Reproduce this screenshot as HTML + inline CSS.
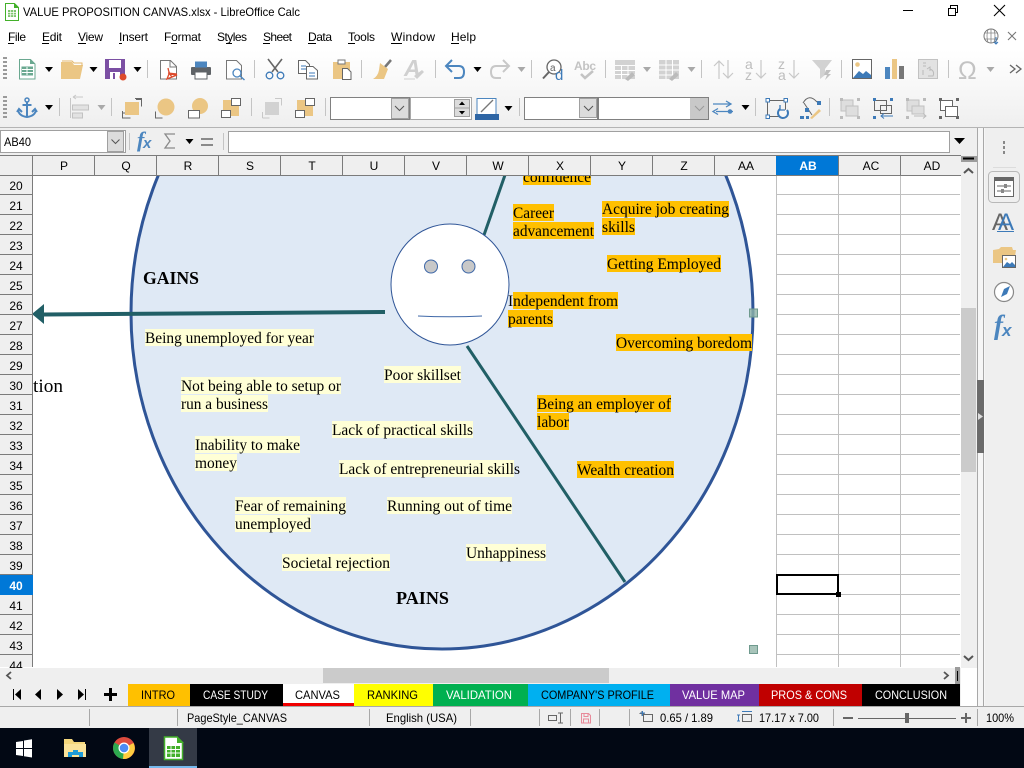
<!DOCTYPE html>
<html lang="en"><head><meta charset="utf-8"><title>VALUE PROPOSITION CANVAS.xlsx - LibreOffice Calc</title>
<style>
html,body{margin:0;padding:0;width:1024px;height:768px;overflow:hidden;background:#fff}
svg{display:block;position:absolute;left:0;top:0}
text{font-family:"Liberation Sans",sans-serif;font-size:12px;fill:#000;white-space:pre}
.s text,text.s{font-family:"Liberation Serif",serif;font-size:15.4px;fill:#000}
.b{font-weight:bold;font-size:17.7px !important}
.c{text-anchor:middle}
.w{fill:#fff}
</style></head><body>
<svg width="1024" height="768" viewBox="0 0 1024 768" xmlns="http://www.w3.org/2000/svg">
<defs>
<linearGradient id="tb" x1="0" y1="0" x2="0" y2="1"><stop offset="0" stop-color="#fff"/><stop offset="1" stop-color="#efefef"/></linearGradient>
<clipPath id="sheet"><rect x="33" y="176" width="927" height="491"/></clipPath>
<polygon id="dd" points="-4,-2 4,-2 0,3" fill="#000"/>
<polygon id="dg" points="-4,-2 4,-2 0,3" fill="#a9a9a9"/>
<g id="sep"><rect x="0" y="0" width="1" height="18" fill="#c4c4c4"/></g>
</defs>

<!-- chrome backgrounds -->
<rect width="1024" height="50" fill="#fff"/>
<rect y="50" width="1024" height="77" fill="url(#tb)"/>
<rect y="127" width="1024" height="1" fill="#b4b4b4"/>
<rect y="128" width="1024" height="28" fill="#efefef"/>

<!-- title bar -->
<g>
<path d="M5.5 3.5h9l4 4v13h-13z" fill="#fff" stroke="#43b02a"/><path d="M14 3l5 5h-5z" fill="#43b02a"/>
<rect x="8" y="10" width="8" height="7" fill="#7fc56e"/><path d="M8 12.5h8M8 14.8h8M10.7 10v7M13.4 10v7" stroke="#fff" stroke-width=".7"/>
</g>
<text x="23" y="16" textLength="277" lengthAdjust="spacingAndGlyphs">VALUE PROPOSITION CANVAS.xlsx - LibreOffice Calc</text>
<rect x="903" y="10" width="10" height="1" fill="#000"/>
<path d="M948.500 8.500h7v7h-7zM950.500 8.500v-3h7v7h-2" fill="none" stroke="#000"/>
<path d="M994 5l11 11M1005 5l-11 11" stroke="#000" stroke-width="1.100"/>

<!-- menu -->
<text x="8" y="41" textLength="18">File</text><rect x="8" y="43" width="6" height="1"/>
<text x="42" y="41" textLength="20">Edit</text><rect x="42" y="43" width="7" height="1"/>
<text x="78" y="41" textLength="25">View</text><rect x="78" y="43" width="8" height="1"/>
<text x="119" y="41" textLength="29">Insert</text><rect x="119" y="43" width="3" height="1"/>
<text x="164" y="41" textLength="37">Format</text><rect x="171" y="43" width="6" height="1"/>
<text x="217" y="41" textLength="30">Styles</text><rect x="226" y="43" width="6" height="1"/>
<text x="263" y="41" textLength="29">Sheet</text><rect x="263" y="43" width="7" height="1"/>
<text x="308" y="41" textLength="24">Data</text><rect x="308" y="43" width="8" height="1"/>
<text x="348" y="41" textLength="27">Tools</text><rect x="348" y="43" width="7" height="1"/>
<text x="391" y="41" textLength="44">Window</text><rect x="391" y="43" width="11" height="1"/>
<text x="451" y="41" textLength="25">Help</text><rect x="451" y="43" width="8" height="1"/>
<circle cx="991" cy="36" r="7" fill="#fff" stroke="#777"/><path d="M984 33h14M984 39h14M988 29.500q-2 6.500 0 13M994 29.500q2 6.500 0 13M991 29v14" fill="none" stroke="#888" stroke-width=".8"/><path d="M996 37v7m-2-2l2 2 2-2" fill="none" stroke="#3d7ab8"/>
<path d="M1008 32l8 8M1016 32l-8 8" stroke="#777" stroke-width="1.100"/>

<!-- toolbar 1 -->
<path d="M3 57h4v2h-4zM3 61h4v2h-4zM3 65h4v2h-4zM3 69h4v2h-4zM3 73h4v2h-4zM3 77h4v2h-4z" fill="#9a9a9a"/>
<path d="M19.500 59.500h11l4.500 4.500v15h-15.500z" fill="#fff" stroke="#6aa890"/><path d="M30 59l5 5h-5z" fill="#6aa890"/>
<rect x="21.500" y="66.500" width="11.500" height="9" fill="#6aa890"/><path d="M22 69.500h11M22 72.500h11M27 67v8" stroke="#fff"/>
<use href="#dd" x="49" y="69"/>
<path d="M61 62h11l2 3h9l-3 14h-19z" fill="#ebc684"/><path d="M62 61h10l2 2h8v3" fill="none" stroke="#e3b86e"/>
<use href="#dd" x="93.500" y="69"/>
<rect x="105" y="59" width="20" height="20" fill="#7b4fa3"/><rect x="109" y="60" width="12" height="8" fill="#fff"/><rect x="110" y="72" width="10" height="7" fill="#fff"/><rect x="113" y="73" width="2" height="6" fill="#7b4fa3"/><circle cx="123" cy="77" r="3.500" fill="#dd4b2c"/>
<use href="#dd" x="137.500" y="69"/>
<use href="#sep" x="147" y="60"/>
<path d="M160.500 60.500h10l6 6v12.500h-16z" fill="#fff" stroke="#777"/><path d="M170 60v7h6" fill="none" stroke="#777"/><path d="M168 68q1 6 4 9M172 77l-5 2 2-5 8 1z M168 73l9 1" fill="none" stroke="#dd4b2c" stroke-width="1.300"/>
<rect x="191" y="67" width="20" height="8" rx="1" fill="#5f6367"/><rect x="195" y="61.500" width="12" height="6" fill="#4c86bf"/><rect x="195" y="72" width="12" height="7" fill="#fff" stroke="#5f6367"/>
<path d="M226.500 60.500h10l5 5v13.500h-15z" fill="#fff" stroke="#777"/><circle cx="237" cy="73" r="4" fill="#fff" stroke="#4c86bf" stroke-width="1.300"/><path d="M240 76l4.500 4" stroke="#4c86bf" stroke-width="1.500"/>
<use href="#sep" x="254" y="60"/>
<path d="M268 59l10 13M282 59l-10 13" stroke="#666" stroke-width="1.600"/><circle cx="269.500" cy="75.500" r="3.300" fill="none" stroke="#3d7ab8" stroke-width="1.300"/><circle cx="280.500" cy="75.500" r="3.300" fill="none" stroke="#3d7ab8" stroke-width="1.300"/>
<path d="M298.500 60.500h7l4 4v9h-11z" fill="#fff" stroke="#666"/><path d="M306.500 66.500h6.500l4.500 4v8.500h-11z" fill="#fff" stroke="#666"/><path d="M301 66h5M301 69h5M309 73h6M309 76h6" stroke="#3d7ab8"/>
<path d="M333 62h17v17h-17z" fill="#ebc684"/><rect x="338" y="60" width="7" height="4" fill="#fff" stroke="#777"/><path d="M342.500 68.500h5l3.500 3.500v7.500h-8.500z" fill="#fff" stroke="#666"/>
<use href="#sep" x="361" y="60"/>
<path d="M391 60l-6 7" stroke="#777" stroke-width="2.500"/><path d="M380 63l8 6-4 10h-11q5-3 6-9z" fill="#ebc684"/>
<text x="404" y="76" style="font-size:23px;font-weight:bold;fill:#d0d0d0;font-style:italic">A</text><path d="M414 76l8-6 2 2-7 7z" fill="#cfcfcf"/><path d="M404 79h11" stroke="#cfcfcf"/>
<use href="#sep" x="435" y="60"/>
<path d="M447 66h12q5 0 5 6t-5 6h-5M452 60l-6 6 6 6" fill="none" stroke="#4c86bf" stroke-width="2"/>
<use href="#dd" x="477.500" y="69"/>
<path d="M508 66h-12q-5 0-5 6t5 6h5M503 60l6 6-6 6" fill="none" stroke="#c8c8c8" stroke-width="2"/>
<use href="#dg" x="521.500" y="69"/>
<use href="#sep" x="531" y="60"/>
<circle cx="554" cy="67" r="7" fill="#fff" stroke="#666" stroke-width="1.300"/><path d="M549 72l-6 6.500" stroke="#666" stroke-width="2"/><text x="550" y="71" style="font-size:10px;fill:#666">a</text><text x="555" y="80" style="font-size:15px;fill:#3d7ab8">d</text>
<text x="574" y="70" style="font-size:12px;font-weight:bold;fill:#c3c3c3" textLength="22">Abc</text><path d="M581 74l4 4 8-7" fill="none" stroke="#c3c3c3" stroke-width="2.500"/>
<use href="#sep" x="605" y="60"/>
<path d="M615 60h20v5h-20zM615 66h20v13h-20z" fill="#d2d2d2"/><path d="M615 70.500h20M615 74.500h20M621.500 66v13M628 66v13" stroke="#fff"/><path d="M625 79l7-7 3 3-7 6z" fill="#bbb"/>
<use href="#dg" x="647" y="69"/>
<path d="M659 60h20v19h-20z" fill="#d2d2d2"/><path d="M659 65h20M659 70h20M659 75h20M666 60v19M672.500 60v19" stroke="#fff"/><path d="M669 79l7-7 3 3-7 6z" fill="#bbb"/>
<use href="#dg" x="691.500" y="69"/>
<use href="#sep" x="701" y="60"/>
<path d="M719 79v-18m-5 5l5-5 5 5M728 60v18m-5-5l5 5 5-5" fill="none" stroke="#c8c8c8" stroke-width="1.200"/>
<text x="745" y="69" style="font-size:14px;fill:#bdbdbd">a</text><text x="745" y="80" style="font-size:14px;fill:#bdbdbd">z</text><path d="M761 60v18m-5-5l5 5 5-5" fill="none" stroke="#c8c8c8" stroke-width="1.200"/>
<text x="778" y="69" style="font-size:14px;fill:#bdbdbd">z</text><text x="778" y="80" style="font-size:14px;fill:#bdbdbd">a</text><path d="M794 60v18m-5-5l5 5 5-5" fill="none" stroke="#c8c8c8" stroke-width="1.200"/>
<path d="M812 60h20l-7 9v6l-5 4v-10z" fill="#d2d2d2"/><path d="M826 70l5 0-3 4 3 0-6 6 2-5-3 0z" fill="#c0c0c0"/>
<use href="#sep" x="841" y="60"/>
<rect x="852.500" y="59.500" width="19" height="19" fill="#fff" stroke="#666"/><path d="M853 78l6-7 4 3 3-3 5 4v3z" fill="#3d7ab8"/><circle cx="857.500" cy="64.500" r="2.300" fill="#ebc684"/>
<rect x="885" y="67" width="5" height="12" fill="#4c86bf"/><rect x="892" y="59" width="5" height="20" fill="#ebc684"/><rect x="899" y="66" width="5" height="13" fill="#777"/>
<rect x="918.500" y="59.500" width="19" height="19" fill="#e2e2e2" stroke="#c2c2c2"/><path d="M923 63h3M923 66h3M923 70v5m5 1h5q2-5-3-7m-3 0l3-2v4" fill="none" stroke="#bbb"/>
<use href="#sep" x="948" y="60"/>
<text x="958" y="79" style="font-size:25px;fill:#c3c3c3" textLength="21">&#937;</text>
<use href="#dg" x="990.500" y="69"/>
<path d="M1010 65l5 4-5 4M1016 65l5 4-5 4" fill="none" stroke="#666" stroke-width="1.300"/>

<!-- toolbar 2 -->
<path d="M3 96h4v2h-4zM3 100h4v2h-4zM3 104h4v2h-4zM3 108h4v2h-4zM3 112h4v2h-4zM3 116h4v2h-4z" fill="#9a9a9a"/>
<circle cx="27" cy="100" r="2" fill="none" stroke="#4c86bf" stroke-width="1.500"/><path d="M27 102v15M22.500 105h9M18 110q1 6 9 7q8-1 9-7M17 112l2-3 3 3M32 112l3-3 2 3" fill="none" stroke="#4c86bf" stroke-width="2"/>
<use href="#dd" x="49" y="107"/>
<use href="#sep" x="59" y="98"/>
<path d="M70.500 98v20" stroke="#c8c8c8"/><path d="M73 97h10M73 97l3-2M73 97l3 2" fill="none" stroke="#c8c8c8"/><rect x="72.500" y="105" width="16" height="5" fill="#e2e2e2" stroke="#c2c2c2"/><rect x="72.500" y="113" width="10" height="5" fill="#e2e2e2" stroke="#c2c2c2"/>
<use href="#dg" x="101.500" y="107"/>
<use href="#sep" x="111" y="98"/>
<path d="M122.500 118v-5h5v-6M122.500 118h8M136 99.500h5.500v7" fill="none" stroke="#666"/><path d="M135 98.500h6.500v7M122.500 111v7h7" fill="none" stroke="#666"/><rect x="125" y="102" width="14" height="13" fill="#ebc684"/>
<circle cx="166" cy="107" r="8.500" fill="#ebc684"/><path d="M155.500 111.500v6.500h7" fill="none" stroke="#666"/>
<circle cx="200" cy="106" r="8" fill="#ebc684"/><rect x="188.500" y="110.500" width="11" height="7.500" fill="#fff" stroke="#666"/>
<rect x="223" y="100" width="16" height="16" fill="#ebc684"/><rect x="231.500" y="98.500" width="9" height="7" fill="#fff" stroke="#666"/><rect x="221.500" y="110.500" width="9" height="7" fill="#fff" stroke="#666"/>
<use href="#sep" x="251" y="98"/>
<path d="M262.500 118v-6M262.500 118h7M275 98.500h6.500v7" fill="none" stroke="#c8c8c8"/><rect x="265" y="102" width="14" height="13" fill="#d2d2d2"/>
<rect x="297" y="100" width="16" height="16" fill="#ebc684"/><rect x="305.500" y="98.500" width="9" height="7" fill="#fff" stroke="#666"/><rect x="295.500" y="110.500" width="9" height="7" fill="#fff" stroke="#666"/>
<use href="#sep" x="325" y="98"/>
<rect x="330.500" y="97.500" width="79" height="22" fill="#fff" stroke="#808080"/>
<rect x="391.500" y="98.500" width="17" height="20" fill="#dcdcdc" stroke="#a0a0a0"/><path d="M395 106l4.500 4.500 4.500-4.500" fill="none" stroke="#555"/>
<rect x="410.500" y="97.500" width="61" height="22" fill="#fff" stroke="#a8a8a8"/>
<rect x="454.500" y="99.500" width="15" height="17" fill="#dcdcdc" stroke="#a0a0a0"/><path d="M455 108h14" stroke="#a0a0a0"/><polygon points="459,105 465,105 462,101.500"/><polygon points="459,111 465,111 462,114.500"/>
<rect x="477" y="98.500" width="19" height="16" fill="#fff" stroke="#4c86bf"/><path d="M481 112l12-12" stroke="#777" stroke-width="1.300"/><rect x="475" y="114" width="24" height="6" fill="#2f66a5"/>
<use href="#dd" x="508.500" y="108"/>
<use href="#sep" x="519" y="98"/>
<rect x="524.500" y="97.500" width="73" height="22" fill="#fff" stroke="#808080"/>
<rect x="579.500" y="98.500" width="17" height="19" fill="#dcdcdc" stroke="#a0a0a0"/><path d="M584 106l4.500 4.500 4.500-4.500" fill="none" stroke="#555"/>
<rect x="598.500" y="97.500" width="110" height="22" fill="#fff" stroke="#808080"/>
<rect x="690" y="98" width="18" height="21" fill="#c8c8c8"/><path d="M695 106l4.500 4.500 4.500-4.500" fill="none" stroke="#9a9a9a"/>
<path d="M713 104h18M726 101l5 3-5 3M733 111.500h-17M718 108.500l-5 3 5 3" fill="none" stroke="#4c86bf" stroke-width="1.300"/><circle cx="730" cy="111.500" r="2.300" fill="#4c86bf"/>
<use href="#dd" x="745.500" y="107"/>
<use href="#sep" x="755" y="98"/>
<rect x="767.500" y="100.500" width="18" height="16" fill="none" stroke="#666"/><path d="M787 110a5 5 0 1 1-7-1" fill="#f6f6f6" stroke="#3d7ab8" stroke-width="2"/><path d="M780 105v5h5" fill="none" stroke="#3d7ab8" stroke-width="1.300"/>
<g fill="#fff" stroke="#3d7ab8"><rect x="766" y="98.500" width="3.500" height="3.500"/><rect x="784" y="98.500" width="3.500" height="3.500"/><rect x="766" y="115" width="3.500" height="3.500"/></g>
<path d="M803 103q6-10 14-1M804 103l8 12" fill="none" stroke="#666"/><path d="M810 118l9-9 2 2-9 8z" fill="#ebc684"/><g fill="#3d7ab8"><rect x="800" y="116" width="4" height="3"/><rect x="806" y="116" width="3" height="3"/><rect x="805" y="108" width="4" height="4"/><rect x="817" y="101" width="4" height="4"/></g>
<use href="#sep" x="829" y="98"/>
<rect x="841" y="100" width="12" height="11" fill="#dedede" stroke="#c0c0c0"/><rect x="846" y="106" width="12" height="10" fill="#dedede" stroke="#c0c0c0"/><g fill="#bbb"><rect x="840" y="98" width="3" height="3"/><rect x="857" y="98" width="3" height="3"/><rect x="840" y="116" width="3" height="3"/><rect x="857" y="116" width="3" height="3"/></g>
<rect x="874.500" y="100.500" width="12" height="10" fill="none" stroke="#666"/><rect x="880.500" y="105.500" width="11" height="8" fill="none" stroke="#666"/><path d="M893 116h-12m3-2.500l-3 2.500 3 2.500" fill="none" stroke="#3d7ab8"/><g fill="#3d7ab8"><rect x="873" y="98" width="3" height="3"/><rect x="890" y="98" width="3" height="3"/><rect x="873" y="116" width="3" height="3"/></g>
<rect x="907" y="100" width="12" height="11" fill="#dedede" stroke="#c0c0c0"/><rect x="912" y="106" width="12" height="8" fill="#dedede" stroke="#c0c0c0"/><path d="M914 116h12m-3-2.500l3 2.500-3 2.500" fill="none" stroke="#bbb"/><g fill="#bbb"><rect x="906" y="98" width="3" height="3"/><rect x="923" y="98" width="3" height="3"/><rect x="906" y="116" width="3" height="3"/></g>
<rect x="940.500" y="100.500" width="12" height="10" fill="#fff" stroke="#666"/><rect x="945.500" y="106.500" width="12" height="10" fill="#fff" stroke="#666"/><g fill="#666"><rect x="939" y="98" width="3" height="3"/><rect x="956" y="98" width="3" height="3"/><rect x="939" y="116" width="3" height="3"/><rect x="956" y="116" width="3" height="3"/></g>

<!-- formula bar -->
<rect x="0.500" y="130.500" width="125" height="22" fill="#fff" stroke="#a0a0a0"/>
<rect x="107.500" y="131.500" width="16" height="20" fill="#dcdcdc" stroke="#a0a0a0"/><path d="M111.500 139.500l4 4 4-4" fill="none" stroke="#555"/>
<text x="4" y="146" textLength="27" lengthAdjust="spacingAndGlyphs">AB40</text>
<rect x="129" y="133" width="1" height="17" fill="#c4c4c4"/>
<text x="137" y="147" style="font-family:'Liberation Serif',serif;font-size:22px;font-weight:bold;font-style:italic;fill:#4c86bf">f</text>
<text x="143" y="148" style="font-size:15px;font-weight:bold;font-style:italic;fill:#4c86bf">x</text>
<path d="M175 134h-10l5 7-5 7h10" fill="none" stroke="#8a8a8a" stroke-width="1.300"/>
<use href="#dd" x="189.500" y="141"/>
<path d="M201 138h12v2h-12zM201 144h12v2h-12z" fill="#8a8a8a"/>
<rect x="223" y="133" width="1" height="17" fill="#c4c4c4"/>
<rect x="228.500" y="131.500" width="721" height="21" fill="#fff" stroke="#a0a0a0"/>
<polygon points="954,138 965,138 959.500,144"/>

<!-- headers -->
<rect y="156" width="961" height="20" fill="#efefef"/>
<rect x="0" y="176" width="33" height="491" fill="#efefef"/>
<rect x="776" y="156" width="63" height="19" fill="#0078d7"/>
<path d="M0 155.500H961M0 175.500H961" stroke="#7b7b7b"/>
<path d="M32.500 156V667M94.500 156v19M156.500 156v19M218.500 156v19M280.500 156v19M342.500 156v19M404.500 156v19M466.500 156v19M528.500 156v19M590.500 156v19M652.500 156v19M714.500 156v19M838.500 156v19M900.500 156v19" stroke="#7b7b7b"/>
<g class="hd">
<text class="c" x="64" y="170">P</text><text class="c" x="126" y="170">Q</text><text class="c" x="188" y="170">R</text><text class="c" x="250" y="170">S</text><text class="c" x="312" y="170">T</text><text class="c" x="374" y="170">U</text><text class="c" x="436" y="170">V</text><text class="c" x="498" y="170">W</text><text class="c" x="560" y="170">X</text><text class="c" x="622" y="170">Y</text><text class="c" x="684" y="170">Z</text><text class="c" x="746" y="170">AA</text><text class="c w" x="808" y="170" style="font-weight:bold">AB</text><text class="c" x="871" y="170">AC</text><text class="c" x="932" y="170">AD</text>
</g>
<path d="M0 194.500h33M0 214.500h33M0 234.500h33M0 254.500h33M0 274.500h33M0 294.500h33M0 314.500h33M0 334.500h33M0 354.500h33M0 374.500h33M0 394.500h33M0 414.500h33M0 434.500h33M0 454.500h33M0 474.500h33M0 494.500h33M0 514.500h33M0 534.500h33M0 554.500h33M0 574.500h33M0 594.500h33M0 614.500h33M0 634.500h33M0 654.500h33" stroke="#7b7b7b"/>
<rect x="0" y="575" width="33" height="20" fill="#0078d7"/>
<text class="c" x="16" y="190">20</text><text class="c" x="16" y="210">21</text><text class="c" x="16" y="230">22</text><text class="c" x="16" y="250">23</text><text class="c" x="16" y="270">24</text><text class="c" x="16" y="290">25</text><text class="c" x="16" y="310">26</text><text class="c" x="16" y="330">27</text><text class="c" x="16" y="350">28</text><text class="c" x="16" y="370">29</text><text class="c" x="16" y="390">30</text><text class="c" x="16" y="410">31</text><text class="c" x="16" y="430">32</text><text class="c" x="16" y="450">33</text><text class="c" x="16" y="470">34</text><text class="c" x="16" y="490">35</text><text class="c" x="16" y="510">36</text><text class="c" x="16" y="530">37</text><text class="c" x="16" y="550">38</text><text class="c" x="16" y="570">39</text><text class="c w" x="16" y="590" style="font-weight:bold">40</text><text class="c" x="16" y="610">41</text><text class="c" x="16" y="630">42</text><text class="c" x="16" y="650">43</text><text class="c" x="16" y="670">44</text>

<!-- sheet -->
<rect x="33" y="176" width="928" height="491" fill="#fff"/>
<g clip-path="url(#sheet)">
<path d="M776.500 176V667M838.500 176V667M900.500 176V667" stroke="#c0c0c0"/>
<path d="M777 194.500H960M777 214.500H960M777 234.500H960M777 254.500H960M777 274.500H960M777 294.500H960M777 314.500H960M777 334.500H960M777 354.500H960M777 374.500H960M777 394.500H960M777 414.500H960M777 434.500H960M777 454.500H960M777 474.500H960M777 494.500H960M777 514.500H960M777 534.500H960M777 554.500H960M777 574.500H960M777 594.500H960M777 614.500H960M777 634.500H960M777 654.500H960" stroke="#c0c0c0"/>
<rect x="777" y="575" width="61" height="19" fill="none" stroke="#000" stroke-width="2"/>
<rect x="836" y="592" width="5" height="5" fill="#000"/>
<text x="33" y="392" style="font-family:'Liberation Serif',serif;font-size:19.300px" textLength="30">tion</text>

<ellipse cx="442" cy="313" rx="311" ry="336" fill="#dfe9f5" stroke="#2f5597" stroke-width="3"/>
<path d="M505 175L484 235M467 346L625 582" stroke="#215f66" stroke-width="3" fill="none"/>
<path d="M385 312L44 314.500" stroke="#215f66" stroke-width="4" fill="none"/>
<polygon points="32,314 44,304 44,324" fill="#215f66"/>
<ellipse cx="450" cy="284.500" rx="59" ry="60.500" fill="#fff" stroke="#2f5597"/>
<circle cx="431" cy="266.500" r="6.500" fill="#c8c8c8" stroke="#3f68a8"/>
<circle cx="468.500" cy="266.500" r="6.500" fill="#c8c8c8" stroke="#3f68a8"/>
<path d="M418 316q32 1.500 64 0" fill="none" stroke="#3f68a8"/>

<g fill="#ffc000">
<rect x="523" y="170" width="68" height="15"/><rect x="513" y="204" width="41" height="17"/><rect x="513" y="222" width="81" height="17"/><rect x="602" y="201" width="127" height="16"/><rect x="602" y="218" width="33" height="17"/><rect x="607" y="255" width="114" height="17"/><rect x="513" y="292" width="105" height="17"/><rect x="508" y="310" width="45" height="17"/><rect x="616" y="334" width="136" height="17"/><rect x="537" y="395" width="134" height="17"/><rect x="537" y="413" width="32" height="17"/><rect x="577" y="461" width="97" height="17"/>
</g>
<g fill="#ffffd6">
<rect x="145" y="329" width="169" height="17"/><rect x="181" y="377" width="160" height="17"/><rect x="181" y="395" width="87" height="17"/><rect x="195" y="436" width="105" height="17"/><rect x="195" y="454" width="42" height="17"/><rect x="235" y="497" width="111" height="17"/><rect x="235" y="515" width="76" height="17"/><rect x="282" y="554" width="108" height="17"/><rect x="384" y="366" width="77" height="17"/><rect x="332" y="421" width="141" height="17"/><rect x="339" y="460" width="175" height="17"/><rect x="387" y="497" width="125" height="17"/><rect x="466" y="544" width="80" height="17"/>
</g>
<g class="s">
<text x="523" y="182" textLength="68" lengthAdjust="spacingAndGlyphs">confidence</text>
<text x="513" y="218" textLength="41" lengthAdjust="spacingAndGlyphs">Career</text>
<text x="513" y="236" textLength="81" lengthAdjust="spacingAndGlyphs">advancement</text>
<text x="602" y="214" textLength="127" lengthAdjust="spacingAndGlyphs">Acquire job creating</text>
<text x="602" y="232" textLength="33" lengthAdjust="spacingAndGlyphs">skills</text>
<text x="607" y="269" textLength="114" lengthAdjust="spacingAndGlyphs">Getting Employed</text>
<text x="508" y="306" textLength="110" lengthAdjust="spacingAndGlyphs">Independent from</text>
<text x="508" y="324" textLength="45" lengthAdjust="spacingAndGlyphs">parents</text>
<text x="616" y="348" textLength="136" lengthAdjust="spacingAndGlyphs">Overcoming boredom</text>
<text x="537" y="409" textLength="134" lengthAdjust="spacingAndGlyphs">Being an employer of</text>
<text x="537" y="427" textLength="32" lengthAdjust="spacingAndGlyphs">labor</text>
<text x="577" y="475" textLength="97" lengthAdjust="spacingAndGlyphs">Wealth creation</text>
<text x="145" y="343" textLength="169" lengthAdjust="spacingAndGlyphs">Being unemployed for year</text>
<text x="181" y="391" textLength="160" lengthAdjust="spacingAndGlyphs">Not being able to setup or</text>
<text x="181" y="409" textLength="87" lengthAdjust="spacingAndGlyphs">run a business</text>
<text x="195" y="450" textLength="105" lengthAdjust="spacingAndGlyphs">Inability to make</text>
<text x="195" y="468" textLength="42" lengthAdjust="spacingAndGlyphs">money</text>
<text x="235" y="511" textLength="111" lengthAdjust="spacingAndGlyphs">Fear of remaining</text>
<text x="235" y="529" textLength="76" lengthAdjust="spacingAndGlyphs">unemployed</text>
<text x="282" y="568" textLength="108" lengthAdjust="spacingAndGlyphs">Societal rejection</text>
<text x="384" y="380" textLength="77" lengthAdjust="spacingAndGlyphs">Poor skillset</text>
<text x="332" y="435" textLength="141" lengthAdjust="spacingAndGlyphs">Lack of practical skills</text>
<text x="339" y="474" textLength="181" lengthAdjust="spacingAndGlyphs">Lack of entrepreneurial skills</text>
<text x="387" y="511" textLength="125" lengthAdjust="spacingAndGlyphs">Running out of time</text>
<text x="466" y="558" textLength="80" lengthAdjust="spacingAndGlyphs">Unhappiness</text>
<text x="143" y="284" class="b" textLength="56" lengthAdjust="spacingAndGlyphs">GAINS</text>
<text x="396" y="604" class="b" textLength="53" lengthAdjust="spacingAndGlyphs">PAINS</text>
</g>
<rect x="749.500" y="309" width="8" height="8" fill="#8fb3a8" fill-opacity=".8" stroke="#6f9a8e"/>
<rect x="749.500" y="645.500" width="8" height="8" fill="#a8c4ba" stroke="#6f9a8e"/>
</g>

<!-- vertical scrollbar + sidebar -->
<rect x="961" y="156" width="16" height="512" fill="#efefef"/>
<rect x="961" y="156" width="16" height="6" fill="#9c9c9c"/><rect x="963" y="157.500" width="11" height="2" fill="#000"/>
<path d="M964 173l4.500-4 4.500 4" fill="none" stroke="#555" stroke-width="2"/>
<rect x="961" y="308" width="15" height="164" fill="#cbcbcb"/>
<path d="M964 656l4.500 4 4.500-4" fill="none" stroke="#555" stroke-width="2"/>
<rect x="977" y="128" width="8" height="578" fill="#f6f6f6"/>
<path d="M977.500 128V706M983.500 128V706" stroke="#a8a8a8"/>
<rect x="977" y="380" width="7" height="73" fill="#6a6a6a"/><polygon points="978,413 983,416.500 978,420" fill="#ddd"/>
<rect x="985" y="128" width="39" height="578" fill="#efefef"/>
<g fill="#888"><rect x="1003" y="141" width="2" height="3"/><rect x="1003" y="146" width="2" height="3"/><rect x="1003" y="151" width="2" height="3"/></g>
<rect x="993" y="167" width="23" height="1" fill="#dcdcdc"/>
<rect x="988.500" y="171.500" width="31" height="31" rx="4" fill="#efefef" stroke="#b8b8b8"/>
<rect x="994.500" y="177.500" width="19" height="19" fill="#fff" stroke="#666"/><rect x="994" y="177" width="20" height="4" fill="#666"/><path d="M997 186h14M997 191h14" stroke="#666"/><rect x="1004" y="184" width="3" height="4" fill="#888"/><rect x="1001" y="189" width="3" height="4" fill="#888"/>
<text x="992" y="230" style="font-size:24px;fill:#666">A</text><text x="998" y="230" style="font-size:24px;fill:#3d7ab8">A</text><rect x="997" y="231" width="17" height="1" fill="#3d7ab8"/>
<path d="M993 250l6-1 2-2h11l1 3h3l-2 13h-21z" fill="#ebc684"/><rect x="1002.500" y="255.500" width="13" height="12" fill="#fff" stroke="#666"/><path d="M1003 267l4-5 3 2 2-2 3 3v2z" fill="#3d7ab8"/><circle cx="1006" cy="259" r="1.300" fill="#ebc684"/>
<circle cx="1004" cy="292" r="9.500" fill="#fff" stroke="#888" stroke-width="1.200"/><path d="M1010 286l-3 8-6 3 3-8z" fill="#3d7ab8"/>
<text x="994" y="334" style="font-family:'Liberation Serif',serif;font-size:27px;font-weight:bold;font-style:italic;fill:#4c86bf">f</text>
<text x="1002" y="336" style="font-size:17px;font-weight:bold;font-style:italic;fill:#4c86bf">x</text>

<!-- h scrollbar -->
<rect x="0" y="668" width="961" height="16" fill="#efefef"/>
<rect x="323" y="668" width="286" height="15" fill="#cbcbcb"/>
<path d="M11 672l-4 3.500 4 3.500" fill="none" stroke="#555" stroke-width="1.800"/>
<path d="M944 672l4 3.500-4 3.500" fill="none" stroke="#555" stroke-width="1.800"/>
<rect x="955" y="667" width="5" height="17" fill="#9c9c9c"/><rect x="957" y="671" width="1" height="10" fill="#000"/>

<!-- tabs row -->
<rect x="0" y="684" width="961" height="22" fill="#efefef"/>
<rect x="13" y="689" width="1" height="11"/><polygon points="21,689 21,700 15,694.500"/>
<polygon points="41,689 41,700 35,694.500"/>
<polygon points="57,689 57,700 63,694.500"/>
<polygon points="78,689 78,700 84,694.500"/><rect x="85" y="689" width="1" height="11"/>
<rect x="104" y="693" width="13" height="3"/><rect x="109" y="688" width="3" height="13"/>
<rect x="128" y="684" width="62" height="22" fill="#ffc000"/>
<rect x="190" y="684" width="93" height="22" fill="#000"/>
<rect x="283" y="684" width="71" height="22" fill="#fff"/><rect x="283" y="703" width="71" height="3" fill="#f00000"/>
<rect x="354" y="684" width="79" height="22" fill="#ff0"/>
<rect x="433" y="684" width="95" height="22" fill="#00b050"/>
<rect x="528" y="684" width="142" height="22" fill="#00b0f0"/>
<rect x="670" y="684" width="89" height="22" fill="#7030a0"/>
<rect x="759" y="684" width="103" height="22" fill="#c00000"/>
<rect x="862" y="684" width="98" height="22" fill="#000"/>
<text x="141" y="699" textLength="34" lengthAdjust="spacingAndGlyphs">INTRO</text>
<text class="w" x="203" y="699" textLength="65" lengthAdjust="spacingAndGlyphs">CASE STUDY</text>
<text x="295" y="699" textLength="45" lengthAdjust="spacingAndGlyphs">CANVAS</text>
<text x="367" y="699" textLength="51" lengthAdjust="spacingAndGlyphs">RANKING</text>
<text class="w" x="446" y="699" textLength="66" lengthAdjust="spacingAndGlyphs">VALIDATION</text>
<text x="541" y="699" textLength="113" lengthAdjust="spacingAndGlyphs">COMPANY'S PROFILE</text>
<text class="w" x="682" y="699" textLength="63" lengthAdjust="spacingAndGlyphs">VALUE MAP</text>
<text class="w" x="771" y="699" textLength="76" lengthAdjust="spacingAndGlyphs">PROS &amp; CONS</text>
<text class="w" x="875" y="699" textLength="72" lengthAdjust="spacingAndGlyphs">CONCLUSION</text>

<!-- status bar -->
<rect x="0" y="706" width="1024" height="22" fill="#efefef"/>
<rect x="0" y="706" width="1024" height="1" fill="#a8a8a8"/>
<path d="M89.500 709v17M177.500 709v17M369.500 709v17M470.500 709v17M539.500 709v17M570.500 709v17M599.500 709v17M629.500 709v17M833.500 709v17M977.500 709v17" stroke="#a8a8a8"/>
<text x="187" y="722" textLength="100" lengthAdjust="spacingAndGlyphs">PageStyle_CANVAS</text>
<text x="386" y="722" textLength="71" lengthAdjust="spacingAndGlyphs">English (USA)</text>
<text x="660" y="722" textLength="53" lengthAdjust="spacingAndGlyphs">0.65 / 1.89</text>
<text x="759" y="722" textLength="60" lengthAdjust="spacingAndGlyphs">17.17 x 7.00</text>
<text x="986" y="722" textLength="28" lengthAdjust="spacingAndGlyphs">100%</text>
<rect x="548.500" y="715.500" width="8" height="5" fill="none" stroke="#666"/><path d="M558 713h5M558 723h5M560.500 713v10" stroke="#666"/>
<path d="M581.500 713.500h7l2 2v7.500h-9zM584 713.500v3h4v-3M583.500 723v-4h5v4" fill="none" stroke="#e88a9a"/>
<path d="M643.500 714.500h9v7h-9zM642 711v5M639.500 713.500h5" fill="none" stroke="#666"/><path d="M640 713h5M642.500 711v5" stroke="#3d7ab8"/>
<path d="M742.500 714.500h9v7h-9zM742 711.500h10M738.500 715v6" fill="none" stroke="#666"/><path d="M742 711.500h10M738.500 715v6M737 715h3M737 721h3" fill="none" stroke="#3d7ab8"/>
<rect x="843" y="717" width="10" height="2" fill="#666"/>
<rect x="858" y="718" width="98" height="1" fill="#666"/>
<rect x="905" y="713" width="4" height="10" fill="#666"/>
<rect x="961" y="717" width="10" height="2" fill="#666"/><rect x="965" y="713" width="2" height="10" fill="#666"/>

<!-- taskbar -->
<rect x="0" y="728" width="1024" height="40" fill="#020814"/>
<path d="M16 742l7-1v7h-7zM24 740.500l8-1.200v8.700h-8zM16 749h7v7l-7-1zM24 749h8v8.500l-8-1.200z" fill="#fff"/>
<path d="M64 739h8l2 3h11v15h-21z" fill="#f5d77c"/><rect x="64" y="744" width="22" height="13" fill="#fbe39a"/><path d="M68 757v-5h5v-2h5v2h5v5h-4v-2h-7v2z" fill="#1e9bd7"/>
<circle cx="124" cy="748" r="11" fill="#dd4b3e"/><path d="M124 748l-9.500-5.500a11 11 0 0 0 9 16.500z" fill="#2da94f"/><path d="M124 748l-1 11a11 11 0 0 0 10.500-16z" fill="#ffcd40"/><circle cx="124" cy="748" r="5.500" fill="#fff"/><circle cx="124" cy="748" r="4.300" fill="#4c8bf5"/>
<rect x="149" y="728" width="48" height="40" fill="#343a46"/><rect x="149" y="766" width="48" height="2" fill="#76b9ed"/>
<path d="M164.500 737h12.500l5.500 5.500v17h-18z" fill="#fff" stroke="#43b02a" stroke-width="1.500"/><path d="M177 736l7 7h-7z" fill="#43b02a"/>
<rect x="167" y="746" width="13" height="11" fill="#43b02a"/><path d="M167 749.500h13M167 753h13M171 746v11M175.500 746v11" stroke="#fff" stroke-width=".9"/>
</svg>
</body></html>
